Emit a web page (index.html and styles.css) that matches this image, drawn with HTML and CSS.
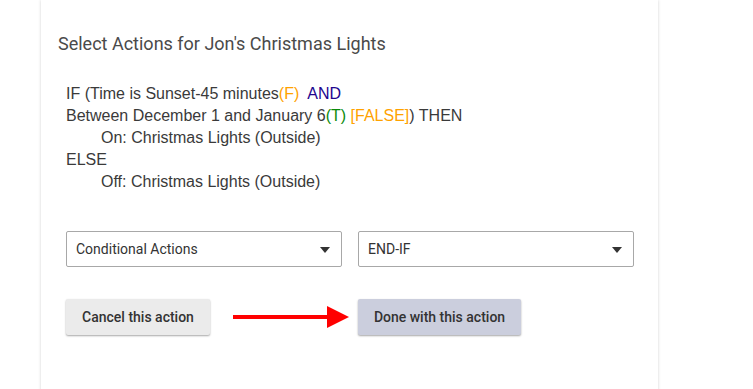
FILE: index.html
```html
<!DOCTYPE html>
<html>
<head>
<meta charset="utf-8">
<link rel="stylesheet" href="styles.css">
</head>
<body>
<div class="card">
  <h2 class="title">Select Actions for Jon's Christmas Lights</h2>
  <div class="rule">
    <div>IF (Time is Sunset-45 minutes<span class="orange">(F)</span>&nbsp; <span class="blue">AND</span></div>
    <div>Between December 1 and January 6<span class="green">(T)</span> <span class="orange">[FALSE]</span>) THEN</div>
    <div class="indent">On: Christmas Lights (Outside)</div>
    <div>ELSE</div>
    <div class="indent">Off: Christmas Lights (Outside)</div>
  </div>
  <div class="selects">
    <div class="select"><span>Conditional Actions</span><span class="caret"></span></div>
    <div class="select"><span>END-IF</span><span class="caret"></span></div>
  </div>
  <div class="buttons">
    <button class="btn cancel">Cancel this action</button>
    <svg class="arrow" width="116" height="22" viewBox="0 0 116 22">
      <rect x="0" y="9" width="96" height="4" fill="#ff0000"/>
      <polygon points="94,0 116,11 94,22" fill="#ff0000"/>
    </svg>
    <button class="btn done">Done with this action</button>
  </div>
</div>
</body>
</html>
```

FILE: styles.css
```css
html, body {
  margin: 0;
  padding: 0;
  background: #ffffff;
  height: 100%;
  overflow: hidden;
}
.card {
  margin-left: 41px;
  width: 617px;
  height: 400px;
  box-sizing: border-box;
  padding: 32px 0 0 17px;
  background: #ffffff;
  box-shadow: 0 0 3px rgba(0, 0, 0, 0.18);
}
.title {
  margin: 0;
  font-family: Roboto, "Liberation Sans", sans-serif;
  font-weight: 400;
  font-size: 18px;
  line-height: 24px;
  color: #4a4a4a;
}
.rule {
  margin: 27px 0 0 8px;
  font-family: "Liberation Sans", Arial, sans-serif;
  font-size: 16px;
  line-height: 22px;
  color: #3a3a3a;
}
.indent {
  padding-left: 35px;
}
.orange { color: #ffa200; }
.blue { color: #22058f; }
.green { color: #0a8a0a; }
.selects {
  display: flex;
  gap: 16px;
  margin: 38px 0 0 8px;
}
.select {
  width: 276px;
  height: 36px;
  box-sizing: border-box;
  border: 1px solid #a8a8a8;
  border-radius: 2px;
  display: flex;
  align-items: center;
  justify-content: space-between;
  padding: 0 11px 0 9px;
  font-family: Roboto, "Liberation Sans", sans-serif;
  font-size: 14px;
  color: #333;
}
.caret {
  width: 0;
  height: 0;
  border-left: 5px solid transparent;
  border-right: 5px solid transparent;
  border-top: 6px solid #333;
  margin-top: 1px;
}
.buttons {
  display: flex;
  align-items: center;
  margin: 32px 0 0 8px;
}
.btn {
  height: 36px;
  border: none;
  border-radius: 2px;
  padding: 0;
  white-space: nowrap;
  font-family: Roboto, "Liberation Sans", sans-serif;
  font-weight: 500;
  font-size: 14px;
  color: #333;
  box-shadow: 0 1px 2px rgba(0, 0, 0, 0.35);
}
.cancel {
  width: 144px;
  background: #ebebeb;
}
.done {
  width: 163px;
  background: #cbcedd;
}
.arrow {
  margin-left: 23px;
  margin-right: 9px;
}
```
